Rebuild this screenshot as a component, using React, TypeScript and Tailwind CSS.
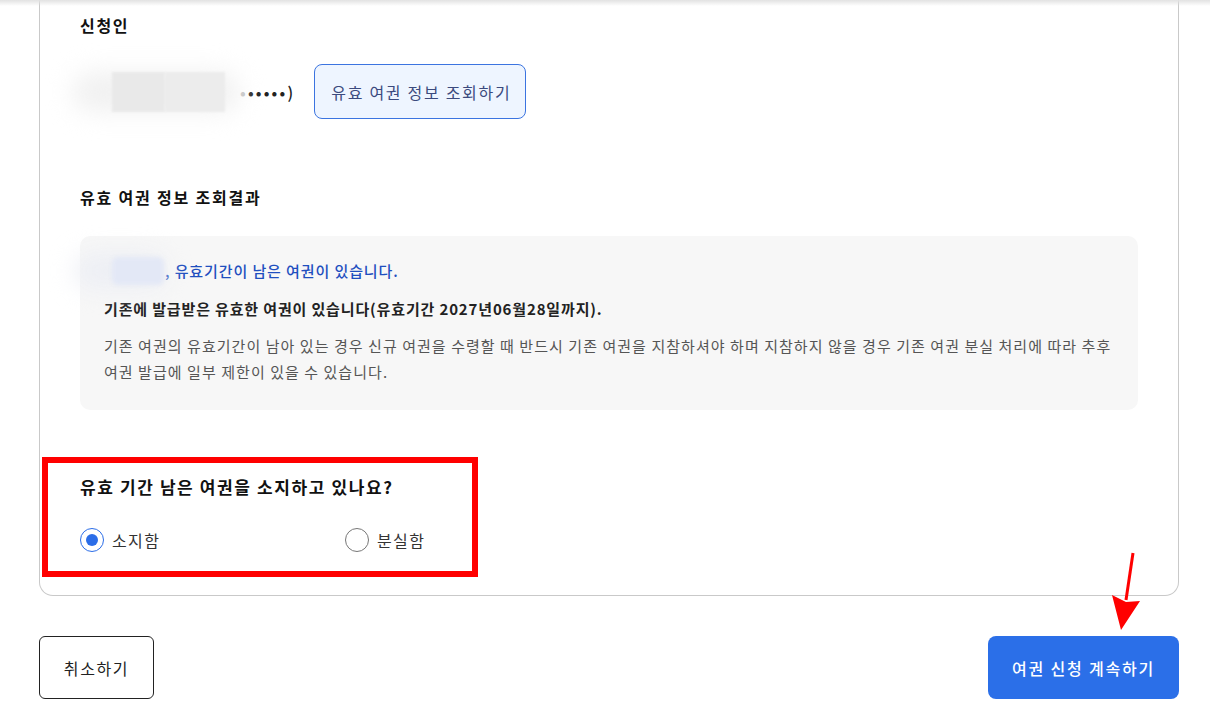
import React from "react";

const font = { fontFamily: '"Noto Sans CJK KR", "Noto Sans", sans-serif' };

function Radio({ checked, label }: { checked?: boolean; label: string }) {
  return (
    <label className="flex items-center gap-2">
      <span
        className={
          checked
            ? "flex h-6 w-6 items-center justify-center rounded-full border-[1.5px] border-[#2b6de8] bg-white"
            : "flex h-6 w-6 items-center justify-center rounded-full border-[1.5px] border-[#777] bg-white"
        }
      >
        {checked && <span className="h-3 w-3 rounded-full bg-[#2b6de8]" />}
      </span>
      <span className="text-[16px] leading-6 tracking-[1.4px] text-[#333]">{label}</span>
    </label>
  );
}

export default function App() {
  return (
    <div className="relative h-[714px] w-[1210px] overflow-hidden bg-white text-[#111]" style={font}>
      <div className="absolute inset-x-0 top-0 h-[6px] bg-gradient-to-b from-[#e2e2e2] to-transparent" />

      <div className="pl-[39px] pr-[31px]">
        <div className="rounded-b-[14px] border-x border-b border-[#c9c9c9] px-10 pt-[13px] pb-[43px]">
          <h2 className="text-[16px] font-bold leading-6 tracking-[1.7px]">신청인</h2>

          <div className="mt-[27px] flex items-center">
            <div className="relative -ml-2 flex h-[40px] w-[168px] items-center">
              <div className="absolute inset-0 rounded-full bg-[#f1f1f1] blur-md" />
              <div className="absolute left-[40px] top-0 h-[40px] w-[53px] bg-[#e9e9e9] blur-[1px]" />
              <div className="absolute left-[93px] top-0 h-[40px] w-[60px] bg-[#ececec] blur-[1px]" />
            </div>
            <span className="text-[16px] font-medium leading-6 tracking-[2.2px] text-[#222]">
              <span className="text-[#bbb]">•</span>•••••)
            </span>
            <button className="ml-[19px] h-[55px] rounded-[8px] border border-[#3b74e0] bg-[#eef5ff] pl-4 pr-[14px] text-[16px] tracking-[1.7px] text-[#3b4a7e]">
              유효 여권 정보 조회하기
            </button>
          </div>

          <h2 className="mt-[66px] text-[16px] font-bold leading-6 tracking-[1.8px]">유효 여권 정보 조회결과</h2>

          <div className="mt-[27px] rounded-[10px] bg-[#f7f7f7] px-6 pt-[23px] pb-[25px]">
            <div className="flex h-6 items-center">
              <div className="relative -ml-[29px] h-[34px] w-[90px]">
                <div className="absolute inset-0 rounded-full bg-[#eceef4] blur-md" />
                <div className="absolute left-[37px] top-[3px] h-[28px] w-[52px] rounded-md bg-[#e3e8f6] blur-[2px]" />
              </div>
              <p className="text-[15px] font-medium leading-6 tracking-[0.9px] text-[#1f4fbf]">, 유효기간이 남은 여권이 있습니다.</p>
            </div>
            <p className="mt-[14px] text-[15px] font-bold leading-6 tracking-[0.85px] text-[#222]">
              기존에 발급받은 유효한 여권이 있습니다(유효기간 2027년06월28일까지).
            </p>
            <p className="mt-[12px] text-[15px] leading-[26px] tracking-[1.05px] text-[#555]">
              기존 여권의 유효기간이 남아 있는 경우 신규 여권을 수령할 때 반드시 기존 여권을 지참하셔야 하며 지참하지 않을 경우 기존 여권 분실 처리에 따라 추후
              <br />
              여권 발급에 일부 제한이 있을 수 있습니다.
            </p>
          </div>

          <div className="relative mt-[65px]">
            <h3 className="text-[17px] font-bold leading-6 tracking-[1.6px]">유효 기간 남은 여권을 소지하고 있나요?</h3>
            <div className="mt-[29px] flex">
              <div className="w-[265px]">
                <Radio checked label="소지함" />
              </div>
              <Radio label="분실함" />
            </div>
            <div className="pointer-events-none absolute left-[-38px] top-[-18px] h-[120px] w-[436px] border-[6px] border-[#ff0000]" />
          </div>
        </div>

        <div className="mt-[40px] flex items-center justify-between">
          <button className="h-[63px] w-[115px] rounded-[6px] border border-[#222] bg-white text-[16px] tracking-[1.6px] text-[#222]">
            취소하기
          </button>
          <button className="h-[63px] w-[191px] rounded-[8px] bg-[#2b6fe8] text-[16px] font-medium tracking-[1.8px] text-white">
            여권 신청 계속하기
          </button>
        </div>
      </div>

      <svg className="pointer-events-none absolute left-[1100px] top-[548px]" width="50" height="90" viewBox="0 0 50 90">
        <line x1="33" y1="5" x2="26" y2="52" stroke="#ff0000" strokeWidth="3" />
        <polygon points="12,47 26,54 40,53 21,82" fill="#ff0000" />
      </svg>
    </div>
  );
}
